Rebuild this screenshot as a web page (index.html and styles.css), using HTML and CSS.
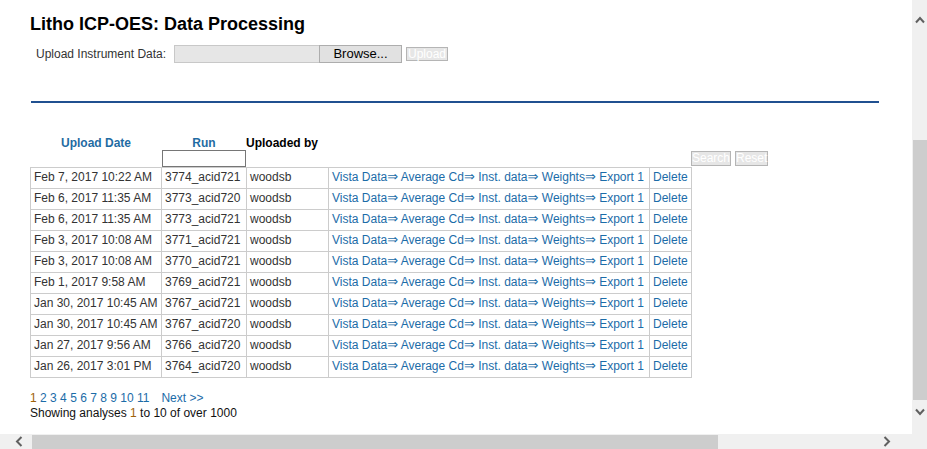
FILE: index.html
```html
<!DOCTYPE html>
<html>
<head>
<meta charset="utf-8">
<title>Litho ICP-OES: Data Processing</title>
<link rel="stylesheet" href="styles.css">
</head>
<body>
<div class="viewport">
  <main class="content">
    <h1 class="title">Litho ICP-OES: Data Processing</h1>
    <div class="upload-row">
      <span class="upload-label">Upload Instrument Data:</span>
      <span class="file-box"></span>
      <span class="browse-btn">Browse...</span>
      <span class="disabled-btn upload-btn">Upload</span>
    </div>
    <div class="rule"></div>
    <div class="list-head">
      <div class="th th-date">Upload Date</div>
      <div class="th th-run">Run</div>
      <div class="th th-by">Uploaded by</div>
      <div class="filter-cell"><span class="filter-input"></span></div>
      <div class="head-buttons">
        <span class="disabled-btn">Search</span>
        <span class="disabled-btn">Reset</span>
      </div>
    </div>
    <table class="runs">
      <colgroup>
        <col class="c-date"><col class="c-run"><col class="c-by"><col class="c-links"><col class="c-del">
      </colgroup>
      <tbody>
        <tr><td>Feb 7, 2017 10:22 AM</td><td>3774_acid721</td><td>woodsb</td><td class="links"><a>Vista Data<span class="arr">⇒</span></a> <a>Average Cd<span class="arr">⇒</span></a> <a>Inst. data<span class="arr">⇒</span></a> <a>Weights<span class="arr">⇒</span></a> <a>Export 1</a></td><td><a>Delete</a></td></tr>
        <tr><td>Feb 6, 2017 11:35 AM</td><td>3773_acid720</td><td>woodsb</td><td class="links"><a>Vista Data<span class="arr">⇒</span></a> <a>Average Cd<span class="arr">⇒</span></a> <a>Inst. data<span class="arr">⇒</span></a> <a>Weights<span class="arr">⇒</span></a> <a>Export 1</a></td><td><a>Delete</a></td></tr>
        <tr><td>Feb 6, 2017 11:35 AM</td><td>3773_acid721</td><td>woodsb</td><td class="links"><a>Vista Data<span class="arr">⇒</span></a> <a>Average Cd<span class="arr">⇒</span></a> <a>Inst. data<span class="arr">⇒</span></a> <a>Weights<span class="arr">⇒</span></a> <a>Export 1</a></td><td><a>Delete</a></td></tr>
        <tr><td>Feb 3, 2017 10:08 AM</td><td>3771_acid721</td><td>woodsb</td><td class="links"><a>Vista Data<span class="arr">⇒</span></a> <a>Average Cd<span class="arr">⇒</span></a> <a>Inst. data<span class="arr">⇒</span></a> <a>Weights<span class="arr">⇒</span></a> <a>Export 1</a></td><td><a>Delete</a></td></tr>
        <tr><td>Feb 3, 2017 10:08 AM</td><td>3770_acid721</td><td>woodsb</td><td class="links"><a>Vista Data<span class="arr">⇒</span></a> <a>Average Cd<span class="arr">⇒</span></a> <a>Inst. data<span class="arr">⇒</span></a> <a>Weights<span class="arr">⇒</span></a> <a>Export 1</a></td><td><a>Delete</a></td></tr>
        <tr><td>Feb 1, 2017 9:58 AM</td><td>3769_acid721</td><td>woodsb</td><td class="links"><a>Vista Data<span class="arr">⇒</span></a> <a>Average Cd<span class="arr">⇒</span></a> <a>Inst. data<span class="arr">⇒</span></a> <a>Weights<span class="arr">⇒</span></a> <a>Export 1</a></td><td><a>Delete</a></td></tr>
        <tr><td>Jan 30, 2017 10:45 AM</td><td>3767_acid721</td><td>woodsb</td><td class="links"><a>Vista Data<span class="arr">⇒</span></a> <a>Average Cd<span class="arr">⇒</span></a> <a>Inst. data<span class="arr">⇒</span></a> <a>Weights<span class="arr">⇒</span></a> <a>Export 1</a></td><td><a>Delete</a></td></tr>
        <tr><td>Jan 30, 2017 10:45 AM</td><td>3767_acid720</td><td>woodsb</td><td class="links"><a>Vista Data<span class="arr">⇒</span></a> <a>Average Cd<span class="arr">⇒</span></a> <a>Inst. data<span class="arr">⇒</span></a> <a>Weights<span class="arr">⇒</span></a> <a>Export 1</a></td><td><a>Delete</a></td></tr>
        <tr><td>Jan 27, 2017 9:56 AM</td><td>3766_acid720</td><td>woodsb</td><td class="links"><a>Vista Data<span class="arr">⇒</span></a> <a>Average Cd<span class="arr">⇒</span></a> <a>Inst. data<span class="arr">⇒</span></a> <a>Weights<span class="arr">⇒</span></a> <a>Export 1</a></td><td><a>Delete</a></td></tr>
        <tr><td>Jan 26, 2017 3:01 PM</td><td>3764_acid720</td><td>woodsb</td><td class="links"><a>Vista Data<span class="arr">⇒</span></a> <a>Average Cd<span class="arr">⇒</span></a> <a>Inst. data<span class="arr">⇒</span></a> <a>Weights<span class="arr">⇒</span></a> <a>Export 1</a></td><td><a>Delete</a></td></tr>
      </tbody>
    </table>
    <div class="pager"><span class="cur">1</span> <a>2</a> <a>3</a> <a>4</a> <a>5</a> <a>6</a> <a>7</a> <a>8</a> <a>9</a> <a>10</a> <a>11</a><a class="next">Next &gt;&gt;</a></div>
    <div class="showing">Showing analyses <span class="cur">1</span> to 10 of over 1000</div>
  </main>
  <div class="vscroll">
    <div class="vs-up"><svg width="10" height="8" viewBox="0 0 10 8"><polyline points="1,6.5 5,2 9,6.5" fill="none" stroke="#606060" stroke-width="2"/></svg></div>
    <div class="vs-track"><div class="vs-thumb"></div></div>
    <div class="vs-down"><svg width="10" height="8" viewBox="0 0 10 8"><polyline points="1,1.5 5,6 9,1.5" fill="none" stroke="#606060" stroke-width="2"/></svg></div>
  </div>
  <div class="hscroll">
    <div class="hs-left"><svg width="8" height="11" viewBox="0 0 8 11"><polyline points="6.5,1 2,5.5 6.5,10" fill="none" stroke="#606060" stroke-width="2"/></svg></div>
    <div class="hs-thumb"></div>
    <div class="hs-space"></div>
    <div class="hs-right"><svg width="8" height="11" viewBox="0 0 8 11"><polyline points="1.5,1 6,5.5 1.5,10" fill="none" stroke="#606060" stroke-width="2"/></svg></div>
  </div>
  <div class="corner"></div>
</div>
</body>
</html>
```
FILE: styles.css
```css
html, body {
  margin: 0;
  padding: 0;
  overflow: hidden;
  background: #fff;
}
body {
  font-family: "Liberation Sans", Arial, sans-serif;
  font-size: 12px;
  color: #333;
}
.viewport {
  width: 927px;
  height: 449px;
  display: grid;
  grid-template-columns: 912px 15px;
  grid-template-rows: 434px 15px;
  overflow: hidden;
}
.content {
  overflow: hidden;
  padding: 14px 0 0 30px;
  box-sizing: border-box;
}
.title {
  margin: 0;
  font-size: 18px;
  line-height: 21px;
  font-weight: bold;
  color: #000;
}
.upload-row {
  margin-top: 10px;
  display: flex;
  align-items: center;
  height: 18px;
}
.upload-label {
  margin-left: 6px;
  width: 138px;
  line-height: 14px;
  color: #333;
}
.file-box {
  width: 145px;
  height: 18px;
  box-sizing: border-box;
  background: #e6e6e6;
  border: 1px solid #c8c8c8;
  border-right: none;
}
.browse-btn {
  width: 83px;
  height: 18px;
  box-sizing: border-box;
  background: #e1e1e1;
  border: 1px solid #adadad;
  font-size: 13px;
  line-height: 16px;
  color: #000;
  text-align: center;
}
.disabled-btn {
  display: inline-block;
  height: 15px;
  box-sizing: border-box;
  padding: 0;
  background: #e6e6e6;
  border: 1px solid #b5b5b5;
  color: #fff;
  font-size: 12px;
  line-height: 13px;
}
.upload-btn {
  margin-left: 4px;
  width: 42px;
  height: 14px;
  line-height: 12px;
  text-align: center;
}
.rule {
  margin: 38px 33px 0 1px;
  height: 2px;
  background: #205090;
}
.list-head {
  margin-top: 33px;
  display: grid;
  grid-template-columns: 132px 84px 445px auto;
  grid-template-rows: 14px 17px;
}
.th {
  font-weight: bold;
  line-height: 14px;
}
.th-date, .th-run {
  color: #1f6ca3;
  text-align: center;
}
.th-by {
  color: #000;
  white-space: nowrap;
}
.filter-cell {
  grid-column: 2;
  grid-row: 2;
}
.filter-input {
  display: block;
  width: 84px;
  height: 17px;
  box-sizing: border-box;
  border: 1px solid #767676;
  background: #fff;
}
.head-buttons {
  grid-column: 4;
  grid-row: 2;
  display: flex;
  gap: 4px;
  align-items: flex-start;
  padding-top: 1px;
}
.runs {
  table-layout: fixed;
  width: 662px;
  border-collapse: separate;
  border-spacing: 0;
  border-top: 1px solid #ccc;
  border-left: 1px solid #ccc;
}
.c-date { width: 131px; }
.c-run { width: 85px; }
.c-by { width: 82px; }
.c-links { width: 321px; }
.c-del { width: 42px; }
.runs td {
  padding: 3px 3px;
  height: 14px;
  line-height: 13.7px;
  border-right: 1px solid #ccc;
  border-bottom: 1px solid #ccc;
  white-space: nowrap;
  overflow: hidden;
  color: #333;
  vertical-align: middle;
}
.runs td.links {
  padding-right: 0;
}
a {
  color: #1b6ca8;
  text-decoration: none;
}
.arr {
  font-family: "DejaVu Sans", sans-serif;
  font-size: 13px;
  line-height: 0;
}
.pager {
  margin-top: 13px;
  line-height: 15px;
}
.cur {
  color: #9e6208;
}
.next {
  margin-left: 12px;
}
.showing {
  line-height: 15px;
  color: #111;
}
.vscroll {
  background: #f0f0f0;
  display: flex;
  flex-direction: column;
}
.vs-up {
  height: 40px;
  box-sizing: border-box;
  padding-top: 16px;
  display: flex;
  justify-content: center;
}
.vs-track {
  height: 360px;
}
.vs-thumb {
  margin: 100px 0 0 1px;
  height: 260px;
  background: #cdcdcd;
}
.vs-down {
  height: 34px;
  box-sizing: border-box;
  padding-top: 8px;
  display: flex;
  justify-content: center;
}
.hscroll {
  background: #f0f0f0;
  display: flex;
}
.hs-left {
  width: 32px;
  box-sizing: border-box;
  padding: 2px 0 0 15px;
}
.hs-thumb {
  width: 686px;
  margin-top: 1px;
  background: #cdcdcd;
}
.hs-space {
  flex: 1;
}
.hs-right {
  width: 29px;
  box-sizing: border-box;
  padding: 2px 0 0 0;
}
.corner {
  background: #f0f0f0;
}
```
